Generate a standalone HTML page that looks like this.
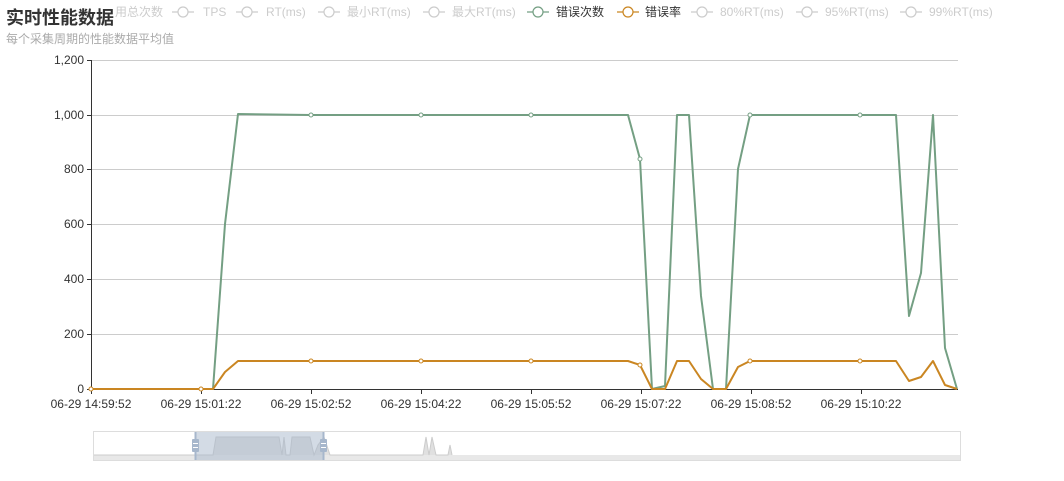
<!DOCTYPE html>
<html><head><meta charset="utf-8"><style>
html,body{margin:0;padding:0;background:#fff;width:1064px;height:481px;overflow:hidden}
svg{display:block}
text{font-family:"Liberation Sans","Noto Sans CJK SC",sans-serif}
</style></head><body>
<svg width="1064" height="481" xmlns="http://www.w3.org/2000/svg">
<g stroke="#ccc" stroke-width="1">
<line x1="91" x2="958" y1="60.5" y2="60.5"/>
<line x1="91" x2="958" y1="115.5" y2="115.5"/>
<line x1="91" x2="958" y1="169.5" y2="169.5"/>
<line x1="91" x2="958" y1="224.5" y2="224.5"/>
<line x1="91" x2="958" y1="279.5" y2="279.5"/>
<line x1="91" x2="958" y1="334.5" y2="334.5"/>
</g>
<g stroke="#333" stroke-width="1">
<line x1="91.5" x2="91.5" y1="60" y2="389"/>
<line x1="91" x2="958" y1="389.5" y2="389.5"/>
<line x1="87" x2="91" y1="60.5" y2="60.5"/><line x1="87" x2="91" y1="115.5" y2="115.5"/><line x1="87" x2="91" y1="169.5" y2="169.5"/><line x1="87" x2="91" y1="224.5" y2="224.5"/><line x1="87" x2="91" y1="279.5" y2="279.5"/><line x1="87" x2="91" y1="334.5" y2="334.5"/><line x1="87" x2="91" y1="389.5" y2="389.5"/>
<line x1="91.5" x2="91.5" y1="389" y2="394"/><line x1="201.5" x2="201.5" y1="389" y2="394"/><line x1="311.5" x2="311.5" y1="389" y2="394"/><line x1="421.5" x2="421.5" y1="389" y2="394"/><line x1="531.5" x2="531.5" y1="389" y2="394"/><line x1="641.5" x2="641.5" y1="389" y2="394"/><line x1="751.5" x2="751.5" y1="389" y2="394"/><line x1="861.5" x2="861.5" y1="389" y2="394"/>
</g>
<g font-size="12" fill="#333" text-anchor="end">
<text x="84" y="64">1,200</text><text x="84" y="119">1,000</text><text x="84" y="173">800</text><text x="84" y="228">600</text><text x="84" y="283">400</text><text x="84" y="338">200</text><text x="84" y="393">0</text>
</g>
<g font-size="12" fill="#333" text-anchor="middle">
<text x="91" y="408">06-29 14:59:52</text><text x="201" y="408">06-29 15:01:22</text><text x="311" y="408">06-29 15:02:52</text><text x="421" y="408">06-29 15:04:22</text><text x="531" y="408">06-29 15:05:52</text><text x="641" y="408">06-29 15:07:22</text><text x="751" y="408">06-29 15:08:52</text><text x="861" y="408">06-29 15:10:22</text>
</g>
<polyline fill="none" stroke="#749f83" stroke-width="2" stroke-linejoin="round" points="91,389 213,389 225,224 238,114 311,115 628,115 640,159 652,389 665,386 677,115 689,115 701,296 713,389 726,389 738,169 750,115 896,115 909,316 921,273 933,115 945,348 957,389"/>
<polyline fill="none" stroke="#ca8622" stroke-width="2" stroke-linejoin="round" points="91,389 213,389 225,372 238,361 628,361 640,365 652,389 665,389 677,361 689,361 701,379 713,389 726,389 738,367 750,361 896,361 909,381 921,377 933,361 945,385 957,389"/>
<g fill="#fff" stroke-width="1">
<circle cx="91" cy="389" r="2" stroke="#ca8622"/><circle cx="201" cy="389" r="2" stroke="#ca8622"/>
<circle cx="311" cy="115" r="2" stroke="#749f83"/><circle cx="421" cy="115" r="2" stroke="#749f83"/><circle cx="531" cy="115" r="2" stroke="#749f83"/><circle cx="640" cy="159" r="2" stroke="#749f83"/><circle cx="750" cy="115" r="2" stroke="#749f83"/><circle cx="860" cy="115" r="2" stroke="#749f83"/>
<circle cx="311" cy="361" r="2" stroke="#ca8622"/><circle cx="421" cy="361" r="2" stroke="#ca8622"/><circle cx="531" cy="361" r="2" stroke="#ca8622"/><circle cx="640" cy="365" r="2" stroke="#ca8622"/><circle cx="750" cy="361" r="2" stroke="#ca8622"/><circle cx="860" cy="361" r="2" stroke="#ca8622"/>
</g>
<text x="6" y="24" font-size="18" font-weight="bold" fill="#333">实时性能数据</text>
<text x="6" y="43" font-size="12" fill="#aaa">每个采集周期的性能数据平均值</text>
<g font-size="12" fill="#ccc">
<text x="115" y="16">用总次数</text>
<g stroke="#ccc" stroke-width="1.2" fill="#fff">
<line x1="172" x2="194" y1="12" y2="12"/><circle cx="183" cy="12" r="5"/>
<line x1="236" x2="258" y1="12" y2="12"/><circle cx="247" cy="12" r="5"/>
<line x1="318" x2="340" y1="12" y2="12"/><circle cx="329" cy="12" r="5"/>
<line x1="423" x2="445" y1="12" y2="12"/><circle cx="434" cy="12" r="5"/>
<line x1="691" x2="713" y1="12" y2="12"/><circle cx="702" cy="12" r="5"/>
<line x1="796" x2="818" y1="12" y2="12"/><circle cx="807" cy="12" r="5"/>
<line x1="900" x2="922" y1="12" y2="12"/><circle cx="911" cy="12" r="5"/>
</g>
<g stroke="#749f83" stroke-width="1.2" fill="#fff"><line x1="527" x2="549" y1="12" y2="12"/><circle cx="538" cy="12" r="5"/></g>
<g stroke="#ca8622" stroke-width="1.2" fill="#fff"><line x1="617" x2="639" y1="12" y2="12"/><circle cx="628" cy="12" r="5"/></g>
<text x="203" y="16">TPS</text>
<text x="266" y="16">RT(ms)</text>
<text x="347" y="16">最小RT(ms)</text>
<text x="452" y="16">最大RT(ms)</text>
<text x="556" y="16" fill="#333">错误次数</text>
<text x="645" y="16" fill="#333">错误率</text>
<text x="720" y="16">80%RT(ms)</text>
<text x="825" y="16">95%RT(ms)</text>
<text x="929" y="16">99%RT(ms)</text>
</g>
<rect x="93.5" y="431.5" width="867" height="29" fill="none" stroke="#ddd"/>
<rect x="94" y="455" width="866" height="5" fill="#e8e8e8"/>
<path d="M94,455 L213,455 L216,437 L270,437 L279,437 L282,455 L284,437 L286,455 L290,455 L292,437 L310,437 L314,455 L318,445 L324,437 L330,455 L423,455 L426,437 L429,455 L432,437 L436,455 L448,455 L450,445 L452,455" fill="#e0e0e0" stroke="#ccc" stroke-width="1"/>
<rect x="195" y="432" width="129" height="28" fill="#a7b7cc" fill-opacity="0.5"/>
<line x1="195.5" x2="195.5" y1="432" y2="460" stroke="#a7b7cc" stroke-width="2"/>
<line x1="323.5" x2="323.5" y1="432" y2="460" stroke="#a7b7cc" stroke-width="2"/>
<rect x="192" y="439" width="7" height="13" fill="#a7b7cc" rx="1"/>
<rect x="320" y="439" width="7" height="13" fill="#a7b7cc" rx="1"/>
<g stroke="#fff" stroke-width="1"><line x1="193" x2="198" y1="443.5" y2="443.5"/><line x1="193" x2="198" y1="447.5" y2="447.5"/><line x1="321" x2="326" y1="443.5" y2="443.5"/><line x1="321" x2="326" y1="447.5" y2="447.5"/></g>
</svg>
</body></html>
